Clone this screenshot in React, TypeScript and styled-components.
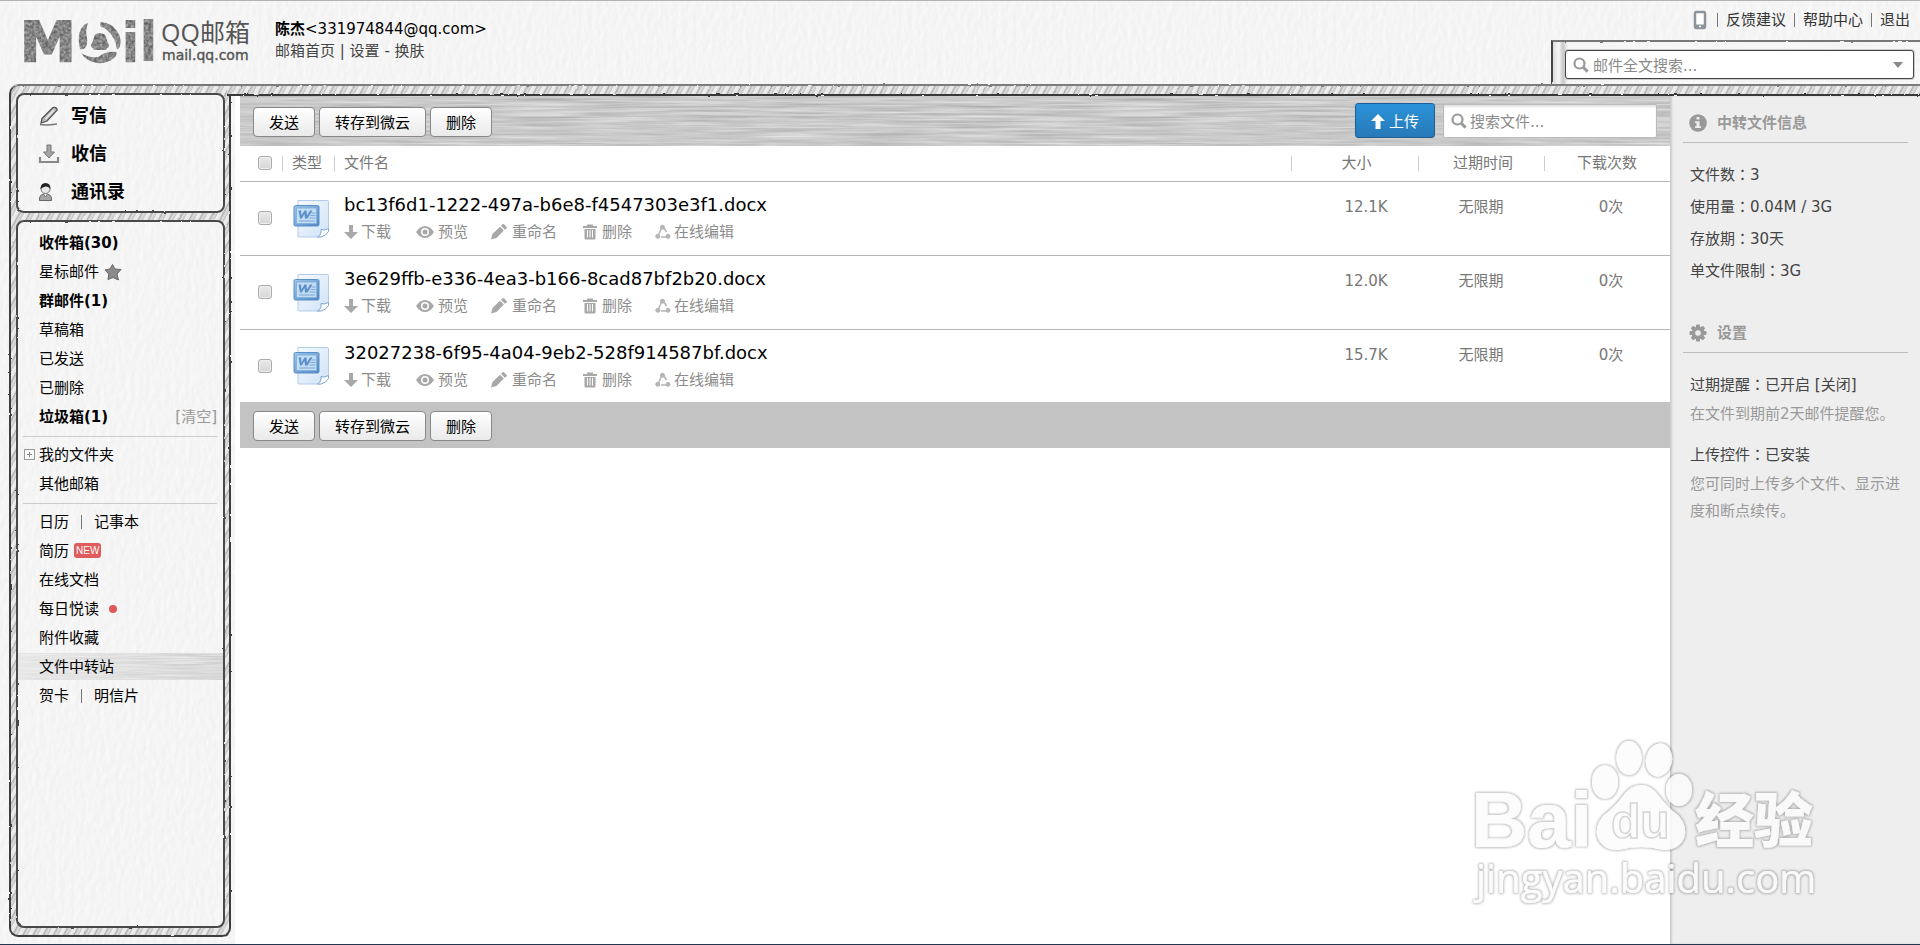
import React from "react";
import styled, { createGlobalStyle, css } from "styled-components";

const svgUrl = (markup: string) => `url("data:image/svg+xml,${encodeURIComponent(markup)}")`;

/* Embossed drawing-paper grain */
const paper = svgUrl(
  `<svg xmlns="http://www.w3.org/2000/svg" width="320" height="320"><filter id="p" x="0" y="0" width="100%" height="100%" color-interpolation-filters="sRGB"><feTurbulence type="fractalNoise" baseFrequency="0.2 0.1" numOctaves="2" seed="4" stitchTiles="stitch" result="n"/><feDiffuseLighting in="n" surfaceScale="0.16" diffuseConstant="1.11" lighting-color="#ffffff"><feDistantLight azimuth="25" elevation="60"/></feDiffuseLighting><feColorMatrix values="0.55 0 0 0 0.432 0.55 0 0 0 0.432 0.55 0 0 0 0.432 0 0 0 0 1"/></filter><rect width="320" height="320" filter="url(#p)"/></svg>`
);

/* Horizontal pencil strokes */
const strokes = svgUrl(
  `<svg xmlns="http://www.w3.org/2000/svg" width="600" height="50"><filter id="s" x="0" y="0" width="100%" height="100%" color-interpolation-filters="sRGB"><feTurbulence type="fractalNoise" baseFrequency="0.012 0.4" numOctaves="3" seed="9" stitchTiles="stitch"/><feColorMatrix values="0.26 0 0 0 0.66 0.26 0 0 0 0.66 0.26 0 0 0 0.66 0 0 0 0 1"/></filter><rect width="600" height="50" filter="url(#s)"/></svg>`
);

const hatch = css`
  background: repeating-linear-gradient(
    118deg,
    #efefef 0px,
    #e6e6e6 3px,
    #b0b0b0 4px,
    #dedede 6px,
    #c6c6c6 8px,
    #efefef 9px
  );
`;

const GlobalStyle = createGlobalStyle`
  * { box-sizing: border-box; }
  body {
    margin: 0;
    font-family: "DejaVu Sans", "Noto Sans CJK SC", sans-serif;
    font-size: 15px;
    line-height: 22px;
    color: #000;
  }
  a { color: inherit; text-decoration: none; }
  ul { list-style: none; margin: 0; padding: 0; }
  button, input { font: inherit; }
`;

const Page = styled.div`
  position: relative;
  display: flex;
  flex-direction: column;
  min-height: 100vh;
  background: #f5f5f5 ${paper};
  border-top: 1px solid #b5b1b4;
  border-bottom: 1px solid #22384f;
  overflow: hidden;
`;

const FilterDefs = styled.svg`
  position: absolute;
  width: 0;
  height: 0;
`;

/* ---------- header ---------- */

const Header = styled.header`
  display: flex;
  height: 83px;
  padding-left: 16px;
`;

const Logo = styled.svg`
  flex: none;
  width: 240px;
  height: 72px;
  overflow: visible;
`;

const Account = styled.div`
  flex: 1;
  padding: 17px 0 0 19px;
  color: #444;
`;

const AccountLine = styled.div<{ $dark?: boolean }>`
  height: 22px;
  white-space: nowrap;
  color: ${(p) => (p.$dark ? "#000" : "#444")};
`;

const HeaderRight = styled.div`
  display: flex;
  flex-direction: column;
  justify-content: space-between;
  align-items: flex-end;
`;

const TopLinks = styled.nav`
  display: flex;
  align-items: center;
  gap: 8px;
  padding: 8px 10px 0 0;
  color: #333;
`;

const Bar = styled.span`
  width: 1px;
  height: 14px;
  background: #777;
`;

const SearchFrame = styled.div`
  position: relative;
  z-index: 0;
  padding: 10px 6px 5px 14px;
  &::before {
    content: "";
    position: absolute;
    z-index: -1;
    inset: 0 -4px -2px 0;
    border-top: 2px solid #777;
    border-left: 2px solid #444;
    background: linear-gradient(90deg, #ddd 0, #f6f6f6 6px, #c8c8c8 10px, transparent 15px), #d4d4d4 ${strokes};
    background-blend-mode: normal, screen;
    filter: url(#rough);
  }
`;

const MailSearch = styled.label`
  display: flex;
  align-items: center;
  width: 349px;
  height: 29px;
  padding: 0 10px 0 7px;
  gap: 4px;
  border: 1px solid #444;
  border-radius: 3px;
  background: #fff;
  box-shadow: 0 0 0 1px #ccc;
`;

const SearchInput = styled.input`
  flex: 1;
  min-width: 0;
  border: 0;
  outline: 0;
  padding: 2px 0 0;
  background: transparent;
  &::placeholder {
    color: #8a8a8a;
    opacity: 1;
  }
`;

/* ---------- frame ---------- */

const Body = styled.div`
  flex: 1;
  display: flex;
`;

const Sidebar = styled.aside`
  position: relative;
  z-index: 0;
  display: flex;
  flex-direction: column;
  gap: 7px;
  flex: none;
  width: 222px;
  margin: 0 0 7px 9px;
  padding: 9px 6px 9px 7px;
  &::before {
    content: "";
    position: absolute;
    z-index: -1;
    inset: 0;
    ${hatch}
    border: 2px solid #3c3c3c;
    border-top-color: #777;
    border-radius: 10px 0 9px 9px;
    filter: url(#rough);
  }
`;

const Panel = styled.nav<{ $grow?: boolean }>`
  position: relative;
  z-index: 0;
  padding: ${(p) => (p.$grow ? "8px 2px" : "4px 2px 2px")};
  flex: ${(p) => (p.$grow ? 1 : "none")};
  &::before {
    content: "";
    position: absolute;
    z-index: -1;
    inset: 0;
    background: #f5f5f5 ${paper};
    border: 2px solid #4a4a4a;
    border-radius: 8px;
    filter: url(#rough);
  }
`;

const MainColumn = styled.div`
  position: relative;
  flex: 1;
  min-width: 0;
  display: flex;
  flex-direction: column;
`;

const Rope = styled.div`
  position: relative;
  height: 12px;
  margin-left: -4px;
  &::before {
    content: "";
    position: absolute;
    inset: 0 -4px 0 0;
    ${hatch}
    border-top: 2px solid #7c7c7c;
    border-bottom: 2px solid #383838;
    filter: url(#rough);
  }
`;

const Content = styled.div`
  flex: 1;
  display: flex;
  margin-left: 4px;
  background: #fff;
  padding-left: 5px;
`;

/* ---------- sidebar parts ---------- */

const PrimaryLink = styled.a`
  display: flex;
  align-items: center;
  height: 38px;
  padding-left: 20px;
  gap: 11px;
  font-size: 18px;
  font-weight: bold;
`;

const FolderRow = styled.li<{ $bold?: boolean; $active?: boolean }>`
  display: flex;
  align-items: center;
  height: 29px;
  padding: 0 6px 0 21px;
  font-weight: ${(p) => (p.$bold ? "bold" : "normal")};
  ${(p) =>
    p.$active &&
    css`
      background: linear-gradient(90deg, rgba(245, 245, 245, 0.7), rgba(245, 245, 245, 0.35)), ${strokes};
      background-size: 100% 27px, auto 27px;
      background-position: left center;
      background-repeat: no-repeat;
    `}
`;

const Divider = styled.hr`
  height: 1px;
  margin: 5px 6px 3px 5px;
  border: 0;
  background: #ccc;
`;

const ClearLink = styled.a`
  margin-left: auto;
  font-weight: normal;
  color: #999;
`;

const ExpandButton = styled.button`
  width: 11px;
  height: 11px;
  margin: 0 4px 0 -15px;
  padding: 0;
  border: 1px solid #999;
  background: linear-gradient(#888, #888) center / 5px 1px no-repeat,
    linear-gradient(#888, #888) center / 1px 5px no-repeat, #f8f8f8;
`;

const RowBar = styled(Bar)`
  margin: 0 12px;
`;

const NewBadge = styled.span`
  margin-left: 5px;
  padding: 0 2px;
  height: 15px;
  border-radius: 3px;
  background: #e05b5b;
  color: #fff;
  font: 10px/15px "Liberation Sans", sans-serif;
`;

const Dot = styled.span`
  width: 8px;
  height: 8px;
  margin-left: 10px;
  border-radius: 50%;
  background: #dd5a5a;
`;

const StarIcon = styled.svg`
  width: 18px;
  height: 18px;
  margin-left: 5px;
`;

/* ---------- file area ---------- */

const Files = styled.main`
  flex: 1;
  min-width: 0;
`;

const Toolbar = styled.div<{ $plain?: boolean }>`
  display: flex;
  align-items: center;
  gap: 4px;
  height: ${(p) => (p.$plain ? 46 : 50)}px;
  padding: 1px 13px 0;
  background: #c3c3c3 ${(p) => (p.$plain ? "none" : strokes)};
`;

const ToolButton = styled.button`
  height: 30px;
  padding: 3px 15px 0;
  border: 1px solid #888;
  border-radius: 4px;
  background: linear-gradient(#fff, #eaeaea);
  color: #000;
  white-space: nowrap;
`;

const UploadButton = styled.button`
  display: flex;
  align-items: center;
  justify-content: center;
  gap: 4px;
  width: 80px;
  height: 35px;
  margin: 0 4px 3px auto;
  padding: 3px 0 0;
  border: 1px solid #1d5f94;
  border-radius: 3px;
  background: linear-gradient(#2b93d8, #2779b8);
  color: #fff;
`;

const FileSearch = styled.label`
  display: flex;
  align-items: center;
  gap: 3px;
  width: 214px;
  height: 34px;
  margin-bottom: 2px;
  padding: 0 7px;
  border: 1px solid #bbb;
  border-radius: 2px;
  background: #fff;
  box-shadow: inset 0 2px 2px #e4e4e4;
`;

const Table = styled.table`
  width: 100%;
  border-collapse: collapse;
  table-layout: fixed;
`;

const Head = styled.th<{ $bar?: boolean; $center?: boolean; $left?: number }>`
  height: 35px;
  padding: 0 0 1px ${(p) => p.$left ?? 10}px;
  border-bottom: 1px solid #b5b5b5;
  font-weight: normal;
  color: #777;
  text-align: ${(p) => (p.$center ? "center" : "left")};
  background: ${(p) => (p.$bar ? "linear-gradient(#ccc, #ccc) left center / 1px 15px no-repeat" : "none")};
`;

const FileRow = styled.tr`
  height: 74px;
  border-bottom: 1px solid #b5b5b5;
  &:last-child {
    height: 73px;
    border-bottom: 0;
  }
`;

const Cell = styled.td<{ $left?: number; $info?: boolean }>`
  padding: 0 0 0 ${(p) => p.$left ?? 0}px;
  ${(p) =>
    p.$info &&
    css`
      padding-top: 14px;
      vertical-align: top;
      text-align: center;
      color: #777;
    `}
`;

const Check = styled.input`
  appearance: none;
  display: block;
  width: 14px;
  height: 14px;
  margin: 0;
  border: 1px solid #aaa;
  border-radius: 3px;
  background: linear-gradient(#e9e9e9, #d6d6d6);
  box-shadow: inset 0 0 0 1px #eee;
`;

const FileName = styled.a`
  display: block;
  height: 24px;
  margin-bottom: 4px;
  font-size: 18px;
  line-height: 24px;
`;

const Actions = styled.div`
  display: flex;
  color: #8c8c8c;
`;

const Action = styled.a<{ $width: number; $gap: number }>`
  display: flex;
  align-items: center;
  flex: none;
  width: ${(p) => p.$width}px;
  gap: ${(p) => p.$gap}px;
  white-space: nowrap;
  svg {
    flex: none;
  }
`;

/* ---------- info panel ---------- */

const Info = styled.aside`
  flex: none;
  width: 250px;
  padding: 8px 12px 0 13px;
  background: #eee;
  box-shadow: inset 2px 0 2px #ccc;
  color: #444;
`;

const InfoTitle = styled.h2<{ $second?: boolean }>`
  display: flex;
  align-items: center;
  gap: 10px;
  height: 39px;
  margin: ${(p) => (p.$second ? "27px" : "0")} 0 16px;
  padding-left: 6px;
  border-bottom: 1px solid #bbb;
  font-size: 15px;
  color: #999;
`;

const InfoLine = styled.p`
  margin: 0;
  padding-left: 7px;
  line-height: 32px;
`;

const InfoNote = styled.p`
  margin: 0 0 11px;
  padding-left: 7px;
  line-height: 27px;
  color: #999;
`;

const Colon = styled.span`
  font-family: "Noto Sans CJK TC", sans-serif;
  line-height: 1;
`;

const Watermark = styled.svg`
  position: absolute;
  right: 90px;
  bottom: 30px;
  width: 370px;
  height: 180px;
  pointer-events: none;
`;

/* ---------- icons ---------- */

const Magnifier = () => (
  <svg width="16" height="16" viewBox="0 0 16 16" fill="none" stroke="#999" aria-hidden>
    <circle cx="6.5" cy="6.5" r="5" strokeWidth="2.2" />
    <path d="M10.3 10.3 14.6 14.6" strokeWidth="3" />
  </svg>
);

const WordIcon = () => (
  <svg width="37" height="39" viewBox="0 0 37 39" style={{ display: "block" }} aria-hidden>
    <defs>
      <linearGradient id="wpage" x1="0" y1="0" x2="1" y2="1">
        <stop offset="0" stopColor="#f6f9fe" />
        <stop offset="1" stopColor="#cfe3f7" />
      </linearGradient>
      <linearGradient id="wbox" x1="0" y1="0" x2="1" y2="1">
        <stop offset="0" stopColor="#9cc8ec" />
        <stop offset="1" stopColor="#4f86c4" />
      </linearGradient>
    </defs>
    <path d="M5 1.5h29.5a1 1 0 0 1 1 1V30l-8 8H6a1 1 0 0 1-1-1z" fill="url(#wpage)" stroke="#b4cbe8" />
    <path d="M35.500 29.500q-5 2.500-7.500 1 .8 5-3.500 7.500h3.500q5-1 7.500-5.500z" fill="#fff" stroke="#7fa6d6" />
    <rect x="1" y="6.500" width="25" height="20.500" rx="1.500" fill="url(#wbox)" stroke="#5a90c8" />
    <rect x="3.500" y="9" width="20" height="15.500" fill="#c3ddf3" stroke="#86b2de" />
    <path d="M5.500 11.500h2.500l.5 5 3-5h2l.5 5 3-5h2.500l-5 8h-2.500l-.5-4.500-2.800 4.500H7z" fill="#5c90cb" />
    <path d="M18.500 14h4M17.500 16.500h5M16.500 19h6M6 22h16" stroke="#7ba8d8" strokeWidth="1.200" />
  </svg>
);

const DownIcon = () => (
  <svg width="14" height="16" viewBox="0 0 14 16" fill="#a8a8a8" aria-hidden>
    <path d="M5 1h4v7h5l-7 7-7-7h5z" />
  </svg>
);
const EyeIcon = () => (
  <svg width="18" height="16" viewBox="0 0 18 16" aria-hidden>
    <path d="M0 8q4-6 9-6t9 6q-4 6-9 6T0 8z" fill="#a8a8a8" />
    <circle cx="9" cy="8" r="4" fill="#fff" />
    <circle cx="9" cy="8" r="2.500" fill="#a8a8a8" />
  </svg>
);
const PencilIcon = () => (
  <svg width="16" height="16" viewBox="0 0 16 16" fill="#a8a8a8" aria-hidden>
    <path d="M0 15.500 1.500 10 9 2.800 12.800 6.600 5.500 14zM10 1.800l1.500-1.500q.8-.5 1.500 0l2.600 2.600q.5.8 0 1.500L13.900 5.700z" />
  </svg>
);
const TrashIcon = () => (
  <svg width="14" height="16" viewBox="0 0 14 16" aria-hidden>
    <path d="M0 2h4V.5h6V2h4v2H0zM1.500 5h11v9.500q0 1-1 1h-9q-1 0-1-1z" fill="#a8a8a8" />
    <path d="M4.500 6v7.500M7 6v7.500M9.500 6v7.500" stroke="#fff" />
  </svg>
);
const ShareIcon = () => (
  <svg width="16" height="16" viewBox="0 0 16 16" fill="#b5b5b5" stroke="#b5b5b5" aria-hidden>
    <path d="M6.500 4 3.500 11M9 4l2.500 4M6 13h6" fill="none" strokeWidth="1.500" />
    <circle cx="7.500" cy="3.200" r="2" />
    <circle cx="2.800" cy="12.300" r="2" />
    <circle cx="13" cy="12.300" r="2" />
  </svg>
);

const WriteIcon = () => (
  <svg width="22" height="20" viewBox="0 0 22 20" fill="none" aria-hidden>
    <path d="M4 12.500 14 2.500q1.500-1.800 3.500-.8t1.500 2.500L9 15l-6 2z" fill="#b8b8b8" stroke="#555" strokeWidth="1.300" />
    <path d="M7.500 13 16 4" stroke="#eee" strokeWidth="1.500" />
    <path d="M2 18.500q6 1 17-.5" stroke="#777" strokeWidth="1.500" />
  </svg>
);
const ReceiveIcon = () => (
  <svg width="22" height="20" viewBox="0 0 22 20" aria-hidden>
    <path d="M9 1h4v7h3.500l-5.500 6-5.500-6H9z" fill="#a5a5a5" stroke="#777" />
    <path d="M2 13v5h18v-5" fill="none" stroke="#888" strokeWidth="2.200" />
  </svg>
);
const ContactsIcon = () => (
  <svg width="22" height="20" viewBox="0 0 22 20" aria-hidden>
    <path d="M1.500 18.500q-.5-5.500 4-6.500h4q4.500 1 4 6.500z" fill="#a5a5a5" stroke="#666" />
    <path d="m5.500 12 2 3 2-3" fill="#eee" stroke="#777" />
    <circle cx="7.500" cy="7" r="4.500" fill="#e8e8e8" stroke="#777" />
    <path d="M2.500 7q0-6 5-6t5 6q-2-3-5-2.500T2.500 7z" fill="#222" />
  </svg>
);

const InfoIcon = () => (
  <svg width="18" height="18" viewBox="0 0 18 18" aria-hidden>
    <circle cx="9" cy="9" r="8.800" fill="#999" />
    <path d="M7.500 3h3v2.500h-3zM6 7.200h4.500v5H12V14H6v-1.800h1.500V9H6z" fill="#eee" />
  </svg>
);
const GearIcon = () => (
  <svg width="18" height="18" viewBox="0 0 18 18" aria-hidden>
    <g fill="#999">
      {[0, 45, 90, 135].map((a) => (
        <rect key={a} x="7" y="0.500" width="4" height="17" rx="1" transform={`rotate(${a} 9 9)`} />
      ))}
      <circle cx="9" cy="9" r="6.400" />
    </g>
    <circle cx="9" cy="9" r="2.800" fill="#eee" />
  </svg>
);

/* ---------- page ---------- */

const files = [
  { name: "bc13f6d1-1222-497a-b6e8-f4547303e3f1.docx", size: "12.1K" },
  { name: "3e629ffb-e336-4ea3-b166-8cad87bf2b20.docx", size: "12.0K" },
  { name: "32027238-6f95-4a04-9eb2-528f914587bf.docx", size: "15.7K" },
];

const ToolButtons = () => (
  <>
    <ToolButton>发送</ToolButton>
    <ToolButton>转存到微云</ToolButton>
    <ToolButton>删除</ToolButton>
  </>
);

export default function App() {
  return (
    <Page>
      <GlobalStyle />
      <FilterDefs aria-hidden>
        <filter id="rough" x="-2%" y="-2%" width="104%" height="104%">
          <feTurbulence type="fractalNoise" baseFrequency="0.15" numOctaves="2" seed="3" result="n" />
          <feDisplacementMap in="SourceGraphic" in2="n" scale="2" xChannelSelector="R" yChannelSelector="G" result="d" />
          <feGaussianBlur in="d" stdDeviation="0.5" />
        </filter>
        <filter id="pencil" x="0" y="0" width="100%" height="100%" colorInterpolationFilters="sRGB">
          <feTurbulence type="fractalNoise" baseFrequency="0.35" numOctaves="2" seed="5" />
          <feColorMatrix values="0.5 0 0 0 0.27  0.5 0 0 0 0.27  0.5 0 0 0 0.27  0 0 0 0 1" />
          <feComposite in2="SourceGraphic" operator="in" />
        </filter>
      </FilterDefs>

      <Header>
        <Logo viewBox="16 1 240 72" role="img" aria-label="QQ邮箱">
          <g filter="url(#pencil)" fontFamily="DejaVu Sans" fontWeight="bold" fontSize="55">
            <text x="20" y="61" fontSize="56" stroke="#000" strokeWidth="2">M</text>
            <text x="121" y="62">i</text>
            <text x="139" y="61">l</text>
            <path d="M80 49Q77 36 81 29Q84 24 88 23Q85 31 87 38Q88 45 85 48Q83 50 80 49zM101 22Q112 23 117 31Q122 38 120 46Q119 50 117 49Q115 37 108 31Q104 27 101 27Q99 24 101 22zM81 53Q88 58 98 57Q106 51 116 52Q118 54 114 58Q107 64 97 63Q86 61 81 53z" />
            <path d="M100 33q6 0 6.500 6 .5 3 2.500 6 0 3-2 3l-1 2h-12l-1-2q-2 0-2-3 2-3 2.500-6 .5-6 6.500-6z" />
          </g>
          <text x="161" y="42" fontFamily="Open Sans, Noto Sans CJK SC" fontSize="25" fill="#555">QQ邮箱</text>
          <text x="162" y="60" fontFamily="DejaVu Sans" fontSize="14" fill="#555" stroke="#555" strokeWidth="0.400">mail.qq.com</text>
        </Logo>
        <Account>
          <AccountLine $dark>
            <b>陈杰</b>&lt;331974844@qq.com&gt;
          </AccountLine>
          <AccountLine>
            <a href="#home">邮箱首页</a> | <a href="#settings">设置</a> - <a href="#skin">换肤</a>
          </AccountLine>
        </Account>
        <HeaderRight>
          <TopLinks>
            <a href="#mobile" aria-label="手机">
              <svg width="16" height="20" viewBox="0 0 16 20" style={{ display: "block" }}>
                <rect x="2" y="2" width="10" height="16" rx="1.500" fill="#fff" stroke="#8b949b" strokeWidth="2.500" />
                <path d="M2 14.500h10v3.500H2z" fill="#8b949b" />
                <path d="M6 16.500h2" stroke="#fff" strokeWidth="1.500" />
              </svg>
            </a>
            <Bar />
            <a href="#feedback">反馈建议</a>
            <Bar />
            <a href="#help">帮助中心</a>
            <Bar />
            <a href="#logout">退出</a>
          </TopLinks>
          <SearchFrame>
            <MailSearch>
              <Magnifier />
              <SearchInput placeholder="邮件全文搜索..." aria-label="邮件全文搜索" />
              <svg width="10" height="6" viewBox="0 0 10 6" aria-hidden>
                <path d="M0 0h10L5 6z" fill="#888" />
              </svg>
            </MailSearch>
          </SearchFrame>
        </HeaderRight>
      </Header>

      <Body>
        <Sidebar>
          <Panel>
            <PrimaryLink href="#write"><WriteIcon />写信</PrimaryLink>
            <PrimaryLink href="#receive"><ReceiveIcon />收信</PrimaryLink>
            <PrimaryLink href="#contacts"><ContactsIcon />通讯录</PrimaryLink>
          </Panel>
          <Panel $grow>
            <ul>
              <FolderRow $bold><a href="#inbox">收件箱(30)</a></FolderRow>
              <FolderRow>
                <a href="#starred">星标邮件</a>
                <StarIcon viewBox="0 0 18 18" aria-hidden>
                  <path d="M8.500 1.500 11 6l6 .5-4 4.500 1.500 6-5.500-2.500-5 2 .8-5.500L1 7l5-1z" fill="#8b8b8b" stroke="#666" />
                </StarIcon>
              </FolderRow>
              <FolderRow $bold><a href="#group">群邮件(1)</a></FolderRow>
              <FolderRow><a href="#drafts">草稿箱</a></FolderRow>
              <FolderRow><a href="#sent">已发送</a></FolderRow>
              <FolderRow><a href="#deleted">已删除</a></FolderRow>
              <FolderRow $bold>
                <a href="#junk">垃圾箱(1)</a>
                <ClearLink href="#clear">[清空]</ClearLink>
              </FolderRow>
            </ul>
            <Divider />
            <ul>
              <FolderRow>
                <ExpandButton aria-label="展开" />
                <a href="#folders">我的文件夹</a>
              </FolderRow>
              <FolderRow><a href="#others">其他邮箱</a></FolderRow>
            </ul>
            <Divider />
            <ul>
              <FolderRow>
                <a href="#calendar">日历</a><RowBar /><a href="#notes">记事本</a>
              </FolderRow>
              <FolderRow><a href="#resume">简历</a><NewBadge>NEW</NewBadge></FolderRow>
              <FolderRow><a href="#docs">在线文档</a></FolderRow>
              <FolderRow><a href="#daily">每日悦读</a><Dot /></FolderRow>
              <FolderRow><a href="#attachments">附件收藏</a></FolderRow>
              <FolderRow $active><a href="#transfer">文件中转站</a></FolderRow>
              <FolderRow>
                <a href="#cards">贺卡</a><RowBar /><a href="#postcards">明信片</a>
              </FolderRow>
            </ul>
          </Panel>
        </Sidebar>

        <MainColumn>
          <Rope />
          <Content>
            <Files>
              <Toolbar>
                <ToolButtons />
                <UploadButton>
                  <svg width="14" height="16" viewBox="0 0 14 16" aria-hidden>
                    <path d="M7 0l7 7H9.500v8h-5V7H0z" fill="#fff" />
                  </svg>
                  上传
                </UploadButton>
                <FileSearch>
                  <Magnifier />
                  <SearchInput placeholder="搜索文件..." aria-label="搜索文件" />
                </FileSearch>
              </Toolbar>
              <Table>
                <colgroup>
                  <col width="42" />
                  <col width="52" />
                  <col />
                  <col width="127" />
                  <col width="126" />
                  <col width="126" />
                </colgroup>
                <thead>
                  <tr>
                    <Head $left={18}><Check type="checkbox" aria-label="全选" /></Head>
                    <Head $bar>类型</Head>
                    <Head $bar>文件名</Head>
                    <Head $bar $center $left={4}>大小</Head>
                    <Head $bar $center $left={4}>过期时间</Head>
                    <Head $bar $center $left={0}>下载次数</Head>
                  </tr>
                </thead>
                <tbody>
                  {files.map((f) => (
                    <FileRow key={f.name}>
                      <Cell $left={18}><Check type="checkbox" aria-label={f.name} /></Cell>
                      <Cell $left={11}><WordIcon /></Cell>
                      <Cell $left={10}>
                        <FileName href="#file">{f.name}</FileName>
                        <Actions>
                          <Action href="#download" $width={72} $gap={3}><DownIcon />下载</Action>
                          <Action href="#preview" $width={75} $gap={4}><EyeIcon />预览</Action>
                          <Action href="#rename" $width={92} $gap={5}><PencilIcon />重命名</Action>
                          <Action href="#remove" $width={72} $gap={5}><TrashIcon />删除</Action>
                          <Action href="#edit" $width={80} $gap={3}><ShareIcon />在线编辑</Action>
                        </Actions>
                      </Cell>
                      <Cell $info $left={23}>{f.size}</Cell>
                      <Cell $info>无限期</Cell>
                      <Cell $info $left={8}>0次</Cell>
                    </FileRow>
                  ))}
                </tbody>
              </Table>
              <Toolbar $plain>
                <ToolButtons />
              </Toolbar>
            </Files>

            <Info>
              <InfoTitle><InfoIcon />中转文件信息</InfoTitle>
              <InfoLine>文件数<Colon>：</Colon>3</InfoLine>
              <InfoLine>使用量<Colon>：</Colon>0.04M / 3G</InfoLine>
              <InfoLine>存放期<Colon>：</Colon>30天</InfoLine>
              <InfoLine>单文件限制<Colon>：</Colon>3G</InfoLine>
              <InfoTitle $second><GearIcon />设置</InfoTitle>
              <InfoLine>过期提醒<Colon>：</Colon>已开启 <a href="#close">[关闭]</a></InfoLine>
              <InfoNote>在文件到期前2天邮件提醒您。</InfoNote>
              <InfoLine>上传控件<Colon>：</Colon>已安装</InfoLine>
              <InfoNote>您可同时上传多个文件、显示进度和断点续传。</InfoNote>
            </Info>
          </Content>
        </MainColumn>
      </Body>

      <Watermark viewBox="1460 734 370 180" role="img" aria-label="Baidu经验">
        <defs>
          <filter id="halo" x="-5%" y="-5%" width="110%" height="110%">
            <feMorphology in="SourceAlpha" operator="dilate" radius="1" />
            <feGaussianBlur stdDeviation="1.200" result="b" />
            <feFlood floodColor="#000" floodOpacity="0.300" />
            <feComposite in2="b" operator="in" result="h" />
            <feMerge>
              <feMergeNode in="h" />
              <feMergeNode in="SourceGraphic" />
            </feMerge>
          </filter>
        </defs>
        <g fill="#fcfcfc" opacity="0.850">
          <g filter="url(#halo)">
            <text x="1471" y="847" fontFamily="Liberation Sans" fontWeight="bold" fontSize="78">Bai</text>
            <ellipse cx="1605" cy="782" rx="13" ry="16.500" />
            <ellipse cx="1629" cy="758" rx="12.500" ry="17" />
            <ellipse cx="1659" cy="760" rx="13" ry="16.500" transform="rotate(12 1659 760)" />
            <ellipse cx="1679" cy="790" rx="13" ry="16" />
            <path d="M1641 785q10 0 18 11t20 20q9 11 5 22-5 12-20 12-12-3-23-3t-23 3q-15 0-20-12-4-11 5-22 12-9 20-20t18-11z" />
            <text x="1695" y="842" fontFamily="Noto Sans CJK SC" fontWeight="900" fontSize="59">经验</text>
          </g>
          <text x="1611" y="838" fontFamily="Liberation Sans" fontWeight="bold" fontSize="48" stroke="#cecece" strokeWidth="1.500">du</text>
          <text x="1476" y="893" fontFamily="Open Sans" fontSize="40" filter="url(#halo)">jingyan.baidu.com</text>
        </g>
      </Watermark>
    </Page>
  );
}
